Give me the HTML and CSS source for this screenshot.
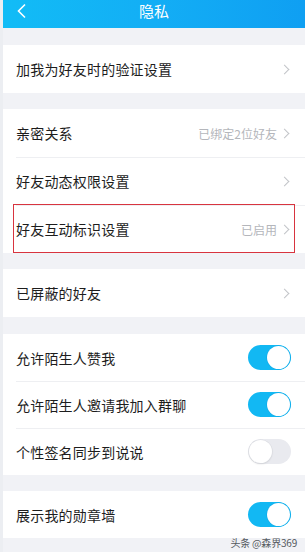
FILE: index.html
```html
<!DOCTYPE html>
<html lang="zh">
<head>
<meta charset="utf-8">
<title>隐私</title>
<link rel="stylesheet" href="styles.css">
</head>
<body>
<div class="page">
  <header class="topbar">
    <svg class="back" width="12" height="16" viewBox="0 0 12 16"><path d="M9 1.5 L2.5 8 L9 14.5" fill="none" stroke="#fff" stroke-width="1.6"/></svg>
    <div class="title">隐私</div>
  </header>

  <div class="gap g1"></div>
  <section class="group">
    <div class="row"><span class="label">加我为好友时的验证设置</span><span class="chev"></span></div>
  </section>

  <div class="gap"></div>
  <section class="group">
    <div class="row"><span class="label">亲密关系</span><span class="value">已绑定2位好友</span><span class="chev"></span></div>
    <div class="row"><span class="label">好友动态权限设置</span><span class="chev"></span></div>
    <div class="row marked"><span class="label">好友互动标识设置</span><span class="value">已启用</span><span class="chev"></span><span class="redbox"></span></div>
  </section>

  <div class="gap"></div>
  <section class="group">
    <div class="row"><span class="label">已屏蔽的好友</span><span class="chev"></span></div>
  </section>

  <div class="gap g2"></div>
  <section class="group">
    <div class="row sw"><span class="label">允许陌生人赞我</span><span class="toggle on"></span></div>
    <div class="row sw"><span class="label">允许陌生人邀请我加入群聊</span><span class="toggle on"></span></div>
    <div class="row sw"><span class="label">个性签名同步到说说</span><span class="toggle"></span></div>
  </section>

  <div class="gap"></div>
  <section class="group">
    <div class="row sw last"><span class="label">展示我的勋章墙</span><span class="toggle on"></span></div>
  </section>

  <div class="watermark">头条 @森界369</div>
</div>
</body>
</html>
```

FILE: styles.css
```css
* { box-sizing: border-box; }
html, body {
  margin: 0;
  padding: 0;
  width: 305px;
  height: 552px;
  overflow: hidden;
  background: #ffffff;
  font-family: "Noto Sans CJK SC", "Noto Sans", sans-serif;
}
.page {
  position: relative;
  width: 305px;
  height: 552px;
  background: #f1f2f6;
  border-left: 3px solid #eceef2;
}
.topbar {
  height: 28px;
  background: linear-gradient(90deg, #12bcf6 0%, #13aef5 50%, #0f9ff2 100%);
  position: relative;
  display: flex;
  align-items: center;
  justify-content: center;
}
.back {
  position: absolute;
  left: 13px;
  top: 3px;
}
.title {
  color: #ffffff;
  font-size: 15px;
  line-height: 20px;
  margin-top: -6px;
}
.gap { height: 16px; }
.g1 { height: 17px; }
.g2 { height: 17px; }
.group {
  background: #ffffff;
}
.row {
  position: relative;
  height: 48px;
  display: flex;
  align-items: center;
  padding: 0 14px 0 13px;
}
.row.sw { height: 47px; }
.row + .row::before {
  content: "";
  position: absolute;
  left: 13px;
  right: 0;
  top: 0;
  height: 1px;
  background: #eeeff2;
}
.label {
  flex: 1;
  font-size: 14px;
  color: #1d1d1d;
  letter-spacing: 0.2px;
}
.value {
  font-size: 12px;
  color: #b4b6bb;
  margin-right: 4px;
}
.chev {
  width: 7px;
  height: 7px;
  border-top: 1.3px solid #c2c4c8;
  border-right: 1.3px solid #c2c4c8;
  transform: rotate(45deg);
  margin-right: 3px;
}
.redbox {
  position: absolute;
  left: 10px;
  right: 10px;
  top: -1px;
  bottom: 0;
  border: 1.5px solid #d8343f;
}
.toggle {
  position: relative;
  width: 43px;
  height: 25px;
  border-radius: 13px;
  background: #e9eaef;
  margin-right: 0px;
}
.toggle::after {
  content: "";
  position: absolute;
  top: 1px;
  left: 1px;
  width: 23px;
  height: 23px;
  border-radius: 50%;
  background: #ffffff;
  box-shadow: 0 0 0 0.6px #d9dbe0, 0 1px 2px rgba(0,0,0,0.12);
}
.toggle.on { background: #12b8f3; }
.toggle.on::after {
  left: auto;
  right: 1px;
  box-shadow: 0 0 0 0.6px #0fa8e6;
}
.watermark {
  position: absolute;
  right: 8px;
  top: 535px;
  font-size: 10px;
  color: #555a60;
  letter-spacing: -0.2px;
}
```
